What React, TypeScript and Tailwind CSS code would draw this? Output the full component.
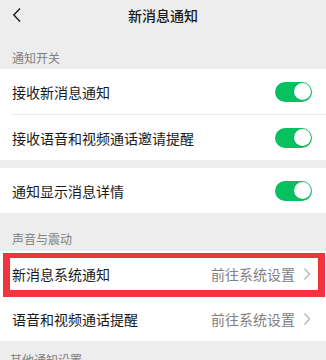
export default function App() {
  return (
    <div
      className="w-[326px] h-[360px] overflow-hidden bg-[#ededed] text-[#1a1a1a]"
      style={{ fontFamily: '"Noto Sans CJK SC", "Noto Sans", sans-serif' }}
    >
      <header className="grid grid-cols-[1fr_auto_1fr] items-center h-[29px]">
        <div className="pl-[12px] flex items-center">
          <svg width="10" height="16" viewBox="0 0 10 16" fill="none">
            <path d="M8 1.5L1.8 8L8 14.5" stroke="#1a1a1a" strokeWidth="1.4" />
          </svg>
        </div>
        <h1 className="text-[14px] font-medium leading-[20px]">新消息通知</h1>
        <div />
      </header>

      <SectionLabel className="h-[40px] pb-[3px]">通知开关</SectionLabel>
      <div className="bg-white">
        <ToggleRow label="接收新消息通知" />
        <div className="ml-[12px] h-px bg-[#e8e8e8]" />
        <ToggleRow label="接收语音和视频通话邀请提醒" />
      </div>

      <div className="h-[8px]" />
      <div className="bg-white">
        <ToggleRow label="通知显示消息详情" />
      </div>

      <SectionLabel className="h-[38px] pb-[4px]">声音与震动</SectionLabel>
      <div className="bg-white">
        <div className="relative">
          <LinkRow label="新消息系统通知" h="h-[46px]" />
          <div className="absolute top-[2px] left-[3px] right-[1px] bottom-0 border-x-[7px] border-t-[5px] border-b-[7px] border-[#f2343d]" />
        </div>
        <LinkRow label="语音和视频通话提醒" h="h-[44px]" />
      </div>

      <div className="pt-[11px] pl-[10px] text-[12px] leading-[16px] text-[#808080]">
        其他通知设置
      </div>
    </div>
  );
}

function SectionLabel({ children, className }: { children: string; className: string }) {
  return (
    <div className={`flex items-end pl-[12px] text-[12px] leading-[16px] text-[#808080] ${className}`}>
      {children}
    </div>
  );
}

function ToggleRow({ label }: { label: string }) {
  return (
    <div className="flex items-center justify-between h-[45px] pl-[12px] pr-[14px]">
      <span className="text-[14px] leading-[20px]">{label}</span>
      <div className="w-[37px] h-[20px] rounded-full bg-[#07c160] flex items-center justify-end p-[1.5px]">
        <div className="w-[17px] h-[17px] rounded-full bg-white shadow-[0_0_1px_rgba(0,0,0,0.25)]" />
      </div>
    </div>
  );
}

function LinkRow({ label, h }: { label: string; h: string }) {
  return (
    <div className={`flex items-center justify-between pl-[12px] pr-[15px] ${h}`}>
      <span className="text-[14px] leading-[20px]">{label}</span>
      <div className="flex items-center gap-[8px]">
        <span className="text-[14px] leading-[20px] text-[#808080]">前往系统设置</span>
        <svg width="8" height="14" viewBox="0 0 8 14" fill="none">
          <path d="M1.5 1.5L6.5 7L1.5 12.5" stroke="#b2b2b2" strokeWidth="1.2" />
        </svg>
      </div>
    </div>
  );
}
